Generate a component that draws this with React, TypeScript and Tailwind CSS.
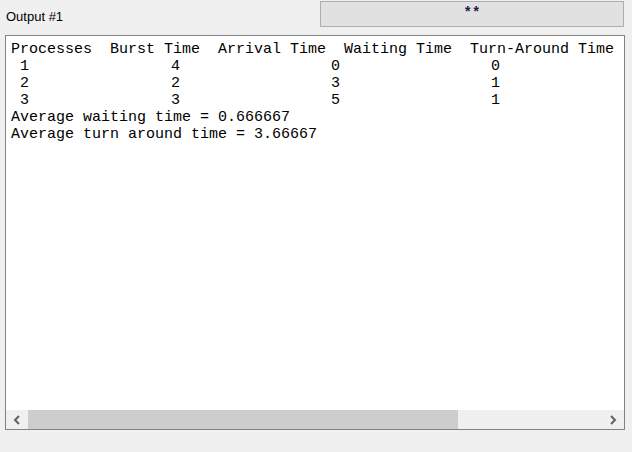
const rows = [
	["1", "4", "0", "0"],
	["2", "2", "3", "1"],
	["3", "3", "5", "1"],
];

function App() {
	return (
		<div className="w-[632px] h-[452px] bg-[#f0f0f0] relative font-['Liberation_Sans',Arial,sans-serif]">
			<div className="flex h-[35px]">
				<div className="w-[320px] pl-[6px] pt-[7px] text-[13px] text-black">Output #1</div>
				<div className="w-[304px] h-[26px] mt-[1px] border border-[#adadad] bg-[#e1e1e1] flex items-center justify-center">
					<span className="text-[14px] font-bold text-[#1a1a4a] font-['Liberation_Mono',monospace] -mt-[2px]">**</span>
				</div>
			</div>
			<div className="ml-[5px] w-[620px] h-[395px] border border-[#828282] bg-white flex flex-col">
				<div className="flex-1 pl-[5px] pt-[5px] font-['Liberation_Mono','Courier_New',monospace] text-[15px] leading-[17px] text-black whitespace-pre overflow-hidden">
					<div>Processes  Burst Time  Arrival Time  Waiting Time  Turn-Around Time</div>
					{rows.map((r) => (
						<div key={r[0]} className="flex">
							<span className="w-[160px]"> {r[0]}</span>
							<span className="w-[160px]">{r[1]}</span>
							<span className="w-[160px]">{r[2]}</span>
							<span>{r[3]}</span>
						</div>
					))}
					<div>Average waiting time = 0.666667</div>
					<div>Average turn around time = 3.66667</div>
				</div>
				<div className="h-[19px] flex bg-[#f0f0f0]">
					<div className="w-[22px] flex items-center justify-center">
						<svg width="8" height="10" viewBox="0 0 8 10">
							<path d="M6 1 L2 5 L6 9" fill="none" stroke="#606060" strokeWidth="2" />
						</svg>
					</div>
					<div className="w-[430px] bg-[#cdcdcd]" />
					<div className="flex-1" />
					<div className="w-[22px] flex items-center justify-center">
						<svg width="8" height="10" viewBox="0 0 8 10">
							<path d="M2 1 L6 5 L2 9" fill="none" stroke="#606060" strokeWidth="2" />
						</svg>
					</div>
				</div>
			</div>
		</div>
	);
}

export default App;
